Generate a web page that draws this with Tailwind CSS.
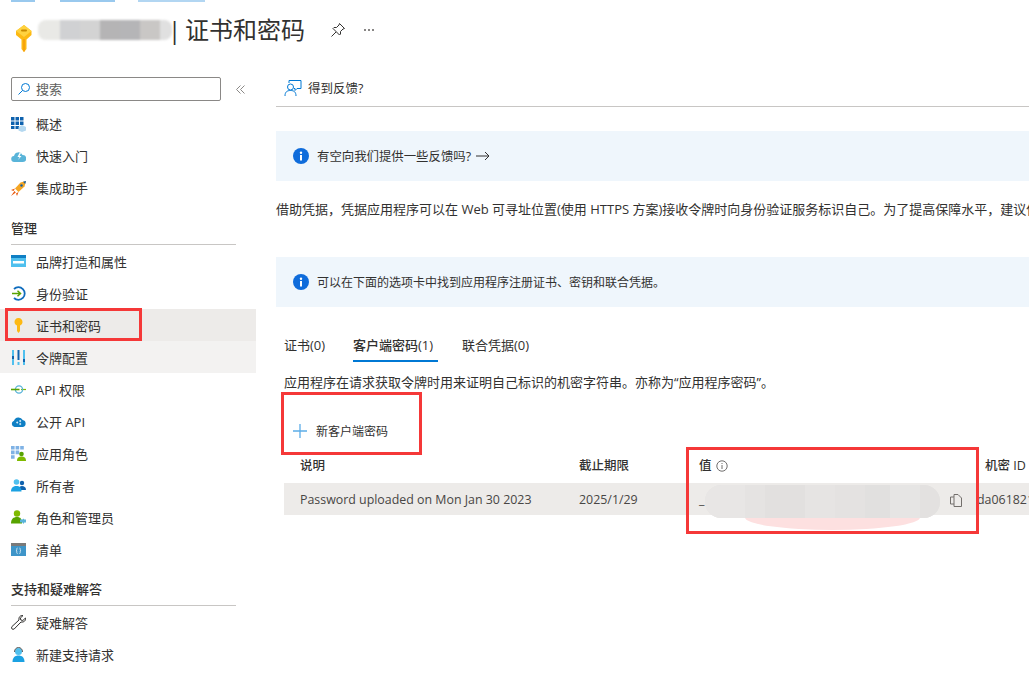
<!DOCTYPE html>
<html lang="zh-CN">
<head>
  <meta charset="UTF-8">
  <title>证书和密码</title>
  <script src="https://cdn.jsdelivr.net/npm/@tailwindcss/browser@4"></script>
</head>
<body class="bg-white">
<div class="relative w-[1029px] h-[693px] overflow-hidden bg-white text-[#323130] text-[13px] leading-[18px] font-['Open_Sans','Noto_Sans_CJK_SC',sans-serif]">

  <!-- breadcrumb: only its blurred lower edge is in the picture -->
  <div class="h-[3px] flex items-start pl-[11px] blur-[0.5px]">
    <div class="w-[24px] h-[2px] bg-[#0078d4]/40"></div>
    <div class="ml-[25px] w-[55px] h-[2px] bg-[#0078d4]/40"></div>
    <div class="ml-[23px] w-[67px] h-[2px] bg-[#0078d4]/30"></div>
  </div>

  <!-- title -->
  <div class="h-[69px] flex items-start pl-[15px] pt-[16px]">
    <svg class="mt-[5px]" width="18" height="29" viewBox="0 0 18 29">
      <path d="M9 1 L16.5 7 V11 L11.5 15.5 V25 L9 28 L6.5 25 V15.5 L1 11 V7 Z" fill="#fdb913"/>
      <path d="M9 1 L16.5 7 L9 13 L1 7 Z" fill="#ffd23f"/>
      <rect x="6" y="5.5" width="6" height="2" rx="1" fill="#c98a00"/>
      <path d="M9 15 V27.5" stroke="#f59e0b" stroke-width="1.5"/>
    </svg>
    <div class="ml-[5px] mt-[1px] flex h-[20px] w-[134px] blur-[1px]">
      <div class="w-[22px] bg-[#e9e9e6] rounded-l-[8px]"></div><div class="w-[20px] bg-[#d0d1d3]"></div><div class="w-[20px] bg-[#d3d3d3]"></div><div class="w-[20px] bg-[#b5b4b5]"></div><div class="w-[20px] bg-[#b5b5b7]"></div><div class="w-[20px] bg-[#c9c7c5]"></div><div class="w-[12px] bg-[#e0e0e0] rounded-r-[8px]"></div>
    </div>
    <div class="-mt-[3px] -ml-[4px] text-[24px] leading-[28px] whitespace-nowrap flex"><span class="w-[17px]">|</span><span>证书和密码</span></div>
    <svg class="ml-[25px] mt-[3px]" width="16" height="16" viewBox="0 0 16 16" fill="none" stroke="#323130" stroke-width="1">
      <path d="M9.5 1.5 L14.5 6.5 L13 7 L10.5 9.5 L10.5 12 L9.5 13 L3 6.5 L4 5.5 L6.5 5.5 L9 3 Z M6 10 L1.5 14.5"/>
    </svg>
    <div class="ml-[18px] mt-[10px] flex gap-[2px]">
      <span class="w-[2px] h-[2px] rounded-full bg-[#605e5c]"></span><span class="w-[2px] h-[2px] rounded-full bg-[#605e5c]"></span><span class="w-[2px] h-[2px] rounded-full bg-[#605e5c]"></span>
    </div>
  </div>

  <div class="flex">
    <!-- sidebar -->
    <aside class="w-[256px] shrink-0 pt-[5px]">
      <div class="flex items-center">
        <div class="ml-[11px] w-[210px] h-[24px] border border-[#8a8886] rounded-[2px] flex items-center pl-[5px] text-[#605e5c]">
          <svg width="14" height="14" viewBox="0 0 14 14" fill="none" stroke="#0078d4" stroke-width="1"><circle cx="8.5" cy="5.5" r="4"/><path d="M5.5 8.5 L1.5 12.5"/></svg>
          <span class="ml-[5px]">搜索</span>
        </div>
        <svg class="ml-[15px]" width="9" height="9" viewBox="0 0 9 9" fill="none" stroke="#8a8886" stroke-width="1"><path d="M4.5 .5 L.5 4.5 L4.5 8.5 M8.5 .5 L4.5 4.5 L8.5 8.5"/></svg>
      </div>

      <nav class="mt-[8px]">
        <a class="h-[32px] pb-[2px] flex items-center pl-[11px] gap-[10px]">
          <svg class="shrink-0" width="15" height="15" viewBox="0 0 15 15"><path d="M0 0h3.5v3.5H0zM4.5 0H8v3.5H4.5zM9 0h3.5v3.5H9zM0 4.5h3.5V8H0zM4.5 4.5H8V8H4.5zM9 4.5h3.5V8H9zM0 9h3.5v3H0zM4.5 9H8v3H4.5z" fill="#0f62ae"/><path d="M11 8 L15 10 V13.5 L11 15 L7.5 13.5 V10 Z" fill="#b4d8f0"/></svg>
          <span>概述</span>
        </a>
        <a class="h-[32px] pb-[2px] flex items-center pl-[11px] gap-[10px]">
          <svg class="shrink-0" width="15" height="15" viewBox="0 0 15 15"><path d="M3.5 13 A3 3 0 0 1 3 7 A4.5 4.5 0 0 1 11.5 6 A3.5 3.5 0 0 1 12 13 Z" fill="#59b4d9"/><path d="M8.5 4 L6.5 8 H8.5 L7 11 L10.5 7 H8.5 L10 4 Z" fill="#fff"/></svg>
          <span>快速入门</span>
        </a>
        <a class="h-[32px] pb-[2px] flex items-center pl-[11px] gap-[10px]">
          <svg class="shrink-0" width="15" height="15" viewBox="0 0 15 15"><path d="M15 0 L9.5 1.5 L4 7.5 L7.5 11 L13.5 5.5 Z" fill="#f5a623"/><path d="M15 0 L12 .8 L14.2 3 Z" fill="#0f62ae"/><circle cx="10.5" cy="4.5" r="1.2" fill="#0f62ae"/><path d="M4 7.5 L0 9 L2.5 10 Z M7.5 11 L6 15 L5 12.5 Z M3.5 10 L4.8 11.5 L0 15 Z" fill="#e8590c"/></svg>
          <span>集成助手</span>
        </a>

        <div class="mx-[11px] mt-[14px] h-[25px] font-medium w-[225px]">管理</div>
        <div class="ml-[11px] w-[225px] h-px bg-[#c8c6c4]"></div>

        <a class="h-[32px] flex items-center pl-[11px] gap-[10px]">
          <svg class="shrink-0" width="15" height="15" viewBox="0 0 15 15"><rect y="1" width="15" height="12" fill="#50c0ee"/><rect y="1" width="15" height="3" fill="#0f7fc4"/><rect x="2" y="7" width="11" height="2.5" fill="#fff"/></svg>
          <span class="pt-[2px]">品牌打造和属性</span>
        </a>
        <a class="h-[32px] flex items-center pl-[11px] gap-[10px]">
          <svg class="shrink-0" width="15" height="15" viewBox="0 0 15 15" fill="none"><path d="M3 3 A6.3 6.3 0 1 1 3 12" stroke="#0f6cbd" stroke-width="1.8"/><path d="M1 7.5 H9.5 M6.5 4.8 L9.5 7.5 L6.5 10.2" stroke="#57a300" stroke-width="1.5"/></svg>
          <span class="pt-[2px]">身份验证</span>
        </a>
        <a class="h-[32px] flex items-center pl-[11px] gap-[10px] bg-[#edebe9]">
          <svg class="shrink-0" width="15" height="15" viewBox="0 0 15 15"><path d="M7.5 0 C10 0 11.5 2 11.5 4 C11.5 5.8 10.3 7 9 7.6 V13 L7.5 15 L6 13 V7.6 C4.7 7 3.5 5.8 3.5 4 C3.5 2 5 0 7.5 0 Z" fill="#fdb913"/></svg>
          <span class="pt-[2px]">证书和密码</span>
        </a>
        <a class="h-[32px] flex items-center pl-[11px] gap-[10px] bg-[#f3f2f1]">
          <svg class="shrink-0" width="15" height="15" viewBox="0 0 15 15"><path d="M1 0h2v15H1zM12 0h2v15h-2z" fill="#50c0ee"/><path d="M6.5 0h2v10h-2z" fill="#0f62ae"/><path d="M6.5 12h2v3h-2z" fill="#50c0ee"/><path d="M1 6h2v3H1zM12 9h2v3h-2z" fill="#0f62ae"/></svg>
          <span class="pt-[2px]">令牌配置</span>
        </a>
        <a class="h-[32px] flex items-center pl-[11px] gap-[10px]">
          <svg class="shrink-0" width="15" height="15" viewBox="0 0 15 15" fill="none"><path d="M10 7.5 H15" stroke="#7fba00" stroke-width="1.2"/><circle cx="8" cy="7.5" r="3.6" stroke="#59b4d9" stroke-width="1.3"/><path d="M0 7.5 H8.5" stroke="#57a300" stroke-width="1.6"/></svg>
          <span class="pt-[2px]">API 权限</span>
        </a>
        <a class="h-[32px] flex items-center pl-[11px] gap-[10px]">
          <svg class="shrink-0" width="15" height="15" viewBox="0 0 15 15"><path d="M3.5 13 A3.2 3.2 0 0 1 3 6.8 A4.7 4.7 0 0 1 11.7 6 A3.6 3.6 0 0 1 12 13 Z" fill="#0f7fc4"/><path d="M5 8.5l1.2-1.2 1.2 1.2-1.2 1.2zM8 7l1.2-1.2L10.4 7 9.2 8.2zM8 10l1.2-1.2 1.2 1.2-1.2 1.2z" fill="#d5ebf7"/></svg>
          <span class="pt-[2px]">公开 API</span>
        </a>
        <a class="h-[32px] flex items-center pl-[11px] gap-[10px]">
          <svg class="shrink-0" width="15" height="15" viewBox="0 0 15 15"><path d="M0 0h3.6v3.6H0zM4.6 0h3.6v3.6H4.6zM9.2 0h3.6v3.6H9.2zM0 4.6h3.6v3.6H0zM4.6 4.6h3.6v3.6H4.6zM0 9.2h3.6v3.6H0z" fill="#7fb2e5"/><circle cx="10.5" cy="8" r="2.3" fill="#57a300"/><path d="M6 15 C6 11.5 8 10.5 10.5 10.5 C13 10.5 15 11.5 15 15 Z" fill="#7fba00"/></svg>
          <span class="pt-[2px]">应用角色</span>
        </a>
        <a class="h-[32px] flex items-center pl-[11px] gap-[10px]">
          <svg class="shrink-0" width="15" height="15" viewBox="0 0 15 15"><circle cx="11" cy="5" r="2.2" fill="#0f62ae"/><path d="M7.5 12 C7.5 9 9 8 11 8 C13 8 15 9 15 12 Z" fill="#0f62ae"/><circle cx="5.5" cy="4" r="2.8" fill="#50c0ee"/><path d="M0 13.5 C0 9.5 2.5 8 5.5 8 C8.5 8 10.5 9.5 10.5 13.5 Z" fill="#1ba1e2"/></svg>
          <span class="pt-[2px]">所有者</span>
        </a>
        <a class="h-[32px] flex items-center pl-[11px] gap-[10px]">
          <svg class="shrink-0" width="15" height="15" viewBox="0 0 15 15"><circle cx="6" cy="3.5" r="3.2" fill="#7fba00"/><path d="M0 13.5 C0 9 2.5 7 6 7 C9.5 7 11 9 11 13.5 Z" fill="#57a300"/><path d="M9 9.5h2.5l.8-1 1 1H15v3h-1.7l-1 1.5-.8-1.5H9z" fill="#59b4d9"/></svg>
          <span class="pt-[2px]">角色和管理员</span>
        </a>
        <a class="h-[32px] flex items-center pl-[11px] gap-[10px]">
          <svg class="shrink-0" width="15" height="15" viewBox="0 0 15 15"><rect y="1" width="15" height="13" fill="#3e95c9"/><rect y="1" width="15" height="3" fill="#7a7a7a"/><path d="M6.5 6 C5.5 6 5.8 7 5.8 8 C5.8 8.7 5 8.7 5 8.7 C5 8.7 5.8 8.7 5.8 9.5 C5.8 10.5 5.5 11.5 6.5 11.5 M8.5 6 C9.5 6 9.2 7 9.2 8 C9.2 8.7 10 8.7 10 8.7 C10 8.7 9.2 8.7 9.2 9.5 C9.2 10.5 9.5 11.5 8.5 11.5" stroke="#fff" stroke-width=".7" fill="none"/></svg>
          <span class="pt-[2px]">清单</span>
        </a>

        <div class="mx-[11px] mt-[15px] h-[25px] font-medium w-[225px]">支持和疑难解答</div>
        <div class="ml-[11px] w-[225px] h-px bg-[#c8c6c4]"></div>

        <a class="h-[32px] flex items-center pl-[11px] gap-[10px]">
          <svg class="shrink-0" width="15" height="15" viewBox="0 0 15 15" fill="none" stroke="#323130" stroke-width="1"><path d="M14.5 3 L11.8 5.5 L9.8 5 L9.3 3 L12 .6 C9.5 0 7.5 2 8 5 L.9 11.6 C-.3 13.5 1.5 15 3.2 14 L10 7 C13 7.5 15 5.5 14.5 3 Z"/></svg>
          <span class="pt-[2px]">疑难解答</span>
        </a>
        <a class="h-[32px] flex items-center pl-[11px] gap-[10px]">
          <svg class="shrink-0" width="15" height="15" viewBox="0 0 15 15"><circle cx="7.5" cy="4.5" r="3.5" fill="#50c0ee"/><path d="M3.5 5 C3.5 -1 11.5 -1 11.5 5" stroke="#555" stroke-width="1" fill="none"/><path d="M1.5 15 C1.5 10.5 4 8.5 7.5 8.5 C11 8.5 13.5 10.5 13.5 15 Z" fill="#1ba1e2"/></svg>
          <span class="pt-[2px]">新建支持请求</span>
        </a>
      </nav>
    </aside>

    <!-- main -->
    <main class="ml-[20px] flex-1 min-w-0">
      <div class="h-[35px] border-b border-[#c8c6c4] flex items-center pl-[8px] pb-[2px]">
        <svg width="18" height="18" viewBox="0 0 18 18" fill="none" stroke="#0078d4" stroke-width="1"><path d="M5 4 V1.5 H17 V9.5 H13 L11 11.5 V9.5 H10"/><circle cx="6.5" cy="8" r="3"/><path d="M1 17 C1 13 3 11.5 6.5 11.5 C10 11.5 12 13 12 17"/></svg>
        <span class="ml-[6px] pt-[2px] text-[12.5px]">得到反馈?</span>
      </div>

      <div class="mt-[24px] h-[50px] bg-[#eff6fc] flex items-center pl-[17px]">
        <svg width="16" height="16" viewBox="0 0 16 16"><circle cx="8" cy="8" r="8" fill="#0f6cdb"/><rect x="7" y="7" width="2" height="5.5" fill="#fff"/><circle cx="8" cy="4.7" r="1.2" fill="#fff"/></svg>
        <span class="ml-[8px] pt-[2px] text-[12.4px]">有空向我们提供一些反馈吗?</span>
        <svg class="ml-[5px]" width="14" height="10" viewBox="0 0 14 10" fill="none" stroke="#323130" stroke-width="1"><path d="M0 5 H13 M9 1 L13 5 L9 9"/></svg>
      </div>

      <p class="mt-[19px] whitespace-nowrap">借助凭据，凭据应用程序可以在 Web 可寻址位置(使用 HTTPS 方案)接收令牌时向身份验证服务标识自己。为了提高保障水平，建议使用证书(而不是客户端密码)作为凭据。</p>

      <div class="mt-[39px] h-[50px] bg-[#eff6fc] flex items-center pl-[17px]">
        <svg width="16" height="16" viewBox="0 0 16 16"><circle cx="8" cy="8" r="8" fill="#0f6cdb"/><rect x="7" y="7" width="2" height="5.5" fill="#fff"/><circle cx="8" cy="4.7" r="1.2" fill="#fff"/></svg>
        <span class="ml-[8px] pt-[2px] text-[12px]">可以在下面的选项卡中找到应用程序注册证书、密钥和联合凭据。</span>
      </div>

      <div class="pl-[8px]">
        <div class="mt-[29px] flex">
          <div class="w-[69px] h-[26px]">证书(0)</div>
          <div class="w-[85px] h-[26px] border-b-2 border-[#0078d4] font-medium whitespace-nowrap">客户端密码(1)</div>
          <div class="ml-[24px] h-[26px]">联合凭据(0)</div>
        </div>
        <p class="mt-[11px] whitespace-nowrap">应用程序在请求获取令牌时用来证明自己标识的机密字符串。亦称为“应用程序密码”。</p>

        <div class="mt-[24px] h-[32px] flex items-center pl-[9px]">
          <svg width="14" height="14" viewBox="0 0 14 14" fill="none" stroke="#5cade8" stroke-width="1.3"><path d="M7 0 V14 M0 7 H14"/></svg>
          <span class="ml-[9px] pt-[2px] text-[12px]">新客户端密码</span>
        </div>

        <div class="grid grid-cols-[279px_120px_286px_1fr] h-[36px] pt-[2px] items-center pl-[16px] font-medium whitespace-nowrap">
          <div class="text-[12.5px]">说明</div>
          <div class="text-[12.5px]">截止期限</div>
          <div class="flex items-center text-[12.5px]">值
            <svg class="ml-[4px]" width="12" height="12" viewBox="0 0 12 12" fill="none" stroke="#605e5c" stroke-width=".9"><circle cx="6" cy="6" r="5.2"/><path d="M6 5 V9 M6 3 V4"/></svg>
          </div>
          <div class="text-[12.5px]">机密 ID</div>
        </div>
        <div class="grid grid-cols-[279px_120px_286px_1fr] h-[32px] pt-[2px] items-center pl-[16px] bg-[#edebe9] text-[12.4px] whitespace-nowrap text-[#484644]">
          <div>Password uploaded on Mon Jan 30 2023</div>
          <div>2025/1/29</div>
          <div class="flex items-center justify-between pr-[23px]">
            <span>_</span>
            <svg width="12" height="13" viewBox="0 0 12 13" fill="none" stroke="#736f6c" stroke-width="1"><path d="M4 3.5 V.5 H8 L11.5 4 V12.5 H4 Z M4 3 H.5 V10 H4"/></svg>
          </div>
          <div class="-ml-[8px]">da061821</div>
        </div>
      </div>
    </main>
  </div>

  <!-- smudge drawn over the secret value -->
  <div class="absolute left-[745px] top-[505px] w-[175px] h-[25px] rounded-[50%] bg-[#fde0e0]"></div>
  <div class="absolute left-[705px] top-[485px] w-[235px] h-[33px] rounded-[16px] overflow-hidden flex bg-[#e6e4e3]">
    <div class="w-[40px] bg-[#e8e6e5]"></div><div class="w-[20px] bg-[#e5e3e2]"></div><div class="w-[40px] bg-[#e2e0df]"></div><div class="w-[30px] bg-[#e6e4e3]"></div><div class="w-[30px] bg-[#e4e2e1]"></div><div class="w-[25px] bg-[#e1e0df]"></div><div class="w-[30px] bg-[#e6e5e4]"></div><div class="w-[20px] bg-[#e3e1e0]"></div>
  </div>

  <!-- red annotation boxes -->
  <div class="absolute left-[5px] top-[308px] w-[137px] h-[33px] border-[3px] border-[#f53838]"></div>
  <div class="absolute left-[281px] top-[392px] w-[141px] h-[63px] border-[3px] border-[#f53838]"></div>
  <div class="absolute left-[686px] top-[447px] w-[293px] h-[87px] border-[3px] border-[#f53838]"></div>
</div>
</body>
</html>
